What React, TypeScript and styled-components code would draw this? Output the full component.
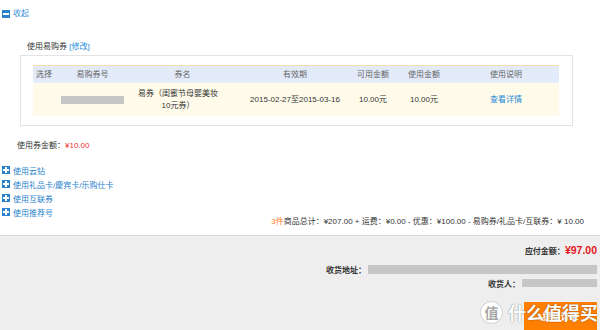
import React from "react";
import styled, { createGlobalStyle } from "styled-components";

const Global = createGlobalStyle`
  html, body { margin: 0; padding: 0; background: #fff; }
  body {
    width: 600px; height: 330px; overflow: hidden;
    font-family: "Liberation Sans", "Noto Sans CJK SC", sans-serif;
    font-size: 8px; color: #333;
  }
`;

const Page = styled.div`
  width: 600px; height: 330px; display: flex; flex-direction: column; overflow: hidden;
`;

const Top = styled.div`
  display: flex; flex-direction: column; height: 235px; flex: none;
`;

const Toggle = styled.div`
  margin-top: 9px; height: 10px; line-height: 10px;
  display: flex; align-items: center; gap: 3px; padding-left: 2px;
  color: #3a8fd9;
`;

const SquareIcon = styled.span`
  width: 8px; height: 8px; background: #2a82cf; position: relative; flex: none;
  &::before {
    content: ""; position: absolute; left: 1px; right: 1px; top: 3px; height: 2px; background: #fff;
  }
  &::after {
    content: ""; position: absolute; top: 1px; bottom: 1px; left: 3px; width: 2px; background: #fff;
    display: ${(p: { plus?: boolean }) => (p.plus ? "block" : "none")};
  }
`;

const SectionLabel = styled.div`
  margin-top: 23px; padding-left: 27px; height: 10px; line-height: 10px; color: #333;
`;

const Link = styled.span`
  color: #2a8fe0;
`;

const CouponBox = styled.div`
  margin: 3px 0 0 20px; width: 553px; box-sizing: border-box;
  border: 1px solid #e3e3e3; padding: 9px 13px 9px 12px;
`;

const Grid = styled.div`
  display: grid;
  grid-template-columns: 27px 65px 115px 110px 46px 56px 108px;
`;

const HeadRow = styled(Grid)`
  height: 18px; box-sizing: border-box; background: #e3ebfb;
  border-top: 1px solid #fadcaa; border-bottom: 1px dotted #f3f3f3;
  color: #666;
`;

const DataRow = styled(Grid)`
  height: 33px; background: #fffbea;
`;

const Cell = styled.div<{ left?: boolean; pl?: number }>`
  display: flex; align-items: center;
  justify-content: ${(p) => (p.left ? "flex-start" : "center")};
  padding-left: ${(p) => p.pl ?? 0}px;
  white-space: nowrap; line-height: 11px;
`;

const Redacted = styled.span<{ w: number; h: number }>`
  display: inline-block; width: ${(p) => p.w}px; height: ${(p) => p.h}px; background: #c6c6c6;
`;

const NameText = styled.div`
  width: 80px; text-align: center; white-space: normal; line-height: 12px;
`;

const LinkCell = styled(Cell)`
  color: #1f8ad6;
`;

const AmountLine = styled.div`
  margin-top: 15px; padding-left: 17px; height: 10px; line-height: 10px;
`;

const Red = styled.span`
  color: #f23030;
`;

const Options = styled.div`
  margin-top: 12px; display: flex; flex-direction: column;
`;

const Option = styled.div`
  height: 14px; display: flex; align-items: center; gap: 3px; padding-left: 2px;
  color: #1f7fcc;
`;

const Summary = styled.div`
  margin-top: -2px; height: 10px; line-height: 10px; text-align: right; padding-right: 16px;
  white-space: nowrap;
`;

const Orange = styled.span`
  color: #ff7a1a;
`;

const Footer = styled.div`
  flex: 1; min-height: 0; overflow: hidden; position: relative; background: #eeeeee;
  border-top: 1px solid #dadada;
  display: flex; flex-direction: column; align-items: flex-end; padding-right: 3px;
`;

const PayRow = styled.div`
  margin-top: 7px; height: 14px; display: flex; align-items: center; flex: none;
  font-weight: bold; color: #333;
`;

const PayAmount = styled.span`
  color: #e4141b; font-size: 10.5px; font-weight: bold;
`;

const InfoRow = styled.div`
  height: 12px; margin-top: ${(p: { mt: number }) => p.mt}px; flex: none;
  display: flex; align-items: center; gap: 2px; font-weight: bold; color: #333;
`;

const SubmitButton = styled.div`
  margin-top: 13px; width: 73px; height: 28px; flex: none; background: #ff7f00; color: #fff;
  font-size: 9px; font-weight: bold; display: flex; align-items: center; justify-content: center;
`;

const Watermark = styled.div`
  position: absolute; right: 2px; bottom: 6px; z-index: 2;
  display: flex; align-items: center; gap: 5px; pointer-events: none;
`;

const WmCircle = styled.div`
  width: 21px; height: 21px; border-radius: 50%; background: #fff;
  border: 1px solid #cfcfcf; color: #a8a8a8; font-size: 14px; font-weight: bold;
  display: flex; align-items: center; justify-content: center;
  font-family: "Noto Sans CJK SC", sans-serif;
`;

const WmText = styled.span`
  display: block; font-family: "Noto Sans CJK SC", sans-serif; font-size: 18px; line-height: 24px;
  font-weight: bold; color: #ffffff; white-space: nowrap;
  text-shadow: 0 0 1px rgba(0,0,0,0.45), 0 0 2px rgba(0,0,0,0.2);
`;

const headers = ["选择", "易购券号", "券名", "有效期", "可用金额", "使用金额", "使用说明"];
const options = ["使用云钻", "使用礼品卡/慶宾卡/乐购仕卡", "使用互联券", "使用推荐号"];

export default function App() {
  return (
    <Page>
      <Global />
      <Top>
        <Toggle>
          <SquareIcon />
          收起
        </Toggle>
        <SectionLabel>
          使用易购券 <Link>[修改]</Link>
        </SectionLabel>
        <CouponBox>
          <HeadRow>
            {headers.map((h, i) => (
              <Cell key={h} left={i === 0} pl={i === 0 ? 3 : 0}>
                {h}
              </Cell>
            ))}
          </HeadRow>
          <DataRow>
            <Cell />
            <Cell>
              <Redacted w={63} h={8} />
            </Cell>
            <Cell left pl={13}>
              <NameText>易券（闺蜜节母婴美妆10元券）</NameText>
            </Cell>
            <Cell>2015-02-27至2015-03-16</Cell>
            <Cell>10.00元</Cell>
            <Cell>10.00元</Cell>
            <LinkCell>查看详情</LinkCell>
          </DataRow>
        </CouponBox>
        <AmountLine>
          使用券金额：<Red>¥10.00</Red>
        </AmountLine>
        <Options>
          {options.map((o) => (
            <Option key={o}>
              <SquareIcon plus />
              {o}
            </Option>
          ))}
        </Options>
        <Summary>
          <Orange>3件</Orange>商品总计：¥207.00 + 运费：¥0.00 - 优惠：¥100.00 - 易购券/礼品卡/互联券：¥ 10.00
        </Summary>
      </Top>
      <Footer>
        <PayRow>
          应付金额：<PayAmount>¥97.00</PayAmount>
        </PayRow>
        <InfoRow mt={6}>
          收货地址：<Redacted w={229} h={9} />
        </InfoRow>
        <InfoRow mt={2}>
          收货人：<Redacted w={75} h={8} />
        </InfoRow>
        <SubmitButton>提交订单</SubmitButton>
        <Watermark>
          <WmCircle>值</WmCircle>
          <WmText>什么值得买</WmText>
        </Watermark>
      </Footer>
    </Page>
  );
}
